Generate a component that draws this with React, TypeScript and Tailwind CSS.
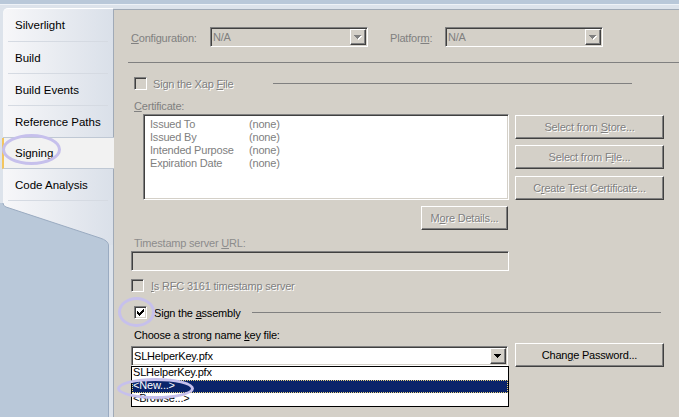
import React from "react";

const emb = "text-[#808080] [text-shadow:1px_1px_0_#ffffff]";
const sunken =
  "border border-t-[#808080] border-l-[#808080] border-b-white border-r-white shadow-[inset_1px_1px_0_#404040,inset_-1px_-1px_0_#d4d0c8]";
const raised =
  "border border-t-white border-l-white border-b-[#404040] border-r-[#404040] shadow-[inset_-1px_-1px_0_#808080]";

function U({ c }: { c: string }) {
  return <span className="underline decoration-1 underline-offset-[1px]">{c}</span>;
}

function ArrowGlyph({ color }: { color: string }) {
  return (
    <>
      <rect x="0" y="0" width="7" height="1" fill={color} />
      <rect x="1" y="1" width="5" height="1" fill={color} />
      <rect x="2" y="2" width="3" height="1" fill={color} />
      <rect x="3" y="3" width="1" height="1" fill={color} />
    </>
  );
}

function Arrow({ disabled }: { disabled?: boolean }) {
  return (
    <div className={`w-[16px] h-full shrink-0 bg-[#d4d0c8] ${raised} flex items-center justify-center`}>
      <svg width="8" height="5" viewBox="0 0 8 5" shapeRendering="crispEdges">
        {disabled ? (
          <>
            <g transform="translate(1,1)">
              <ArrowGlyph color="#ffffff" />
            </g>
            <ArrowGlyph color="#808080" />
          </>
        ) : (
          <ArrowGlyph color="#000000" />
        )}
      </svg>
    </div>
  );
}

function Combo({ width, text, disabled }: { width: string; text: string; disabled?: boolean }) {
  return (
    <div
      className={`${width} h-[20px] p-[1px] ${sunken} ${
        disabled ? "bg-[#d4d0c8] text-[#808080]" : "bg-white text-black"
      } flex items-stretch`}
    >
      <span className="flex-1 pl-[1px] pt-px flex items-center">{text}</span>
      <Arrow disabled={disabled} />
    </div>
  );
}

function Check({ checked, disabled }: { checked?: boolean; disabled?: boolean }) {
  return (
    <div
      className={`w-[13px] h-[13px] shrink-0 ${sunken} ${
        disabled ? "bg-[#d4d0c8]" : "bg-white"
      } flex items-center justify-center`}
    >
      {checked && (
        <svg width="7" height="7" viewBox="0 0 7 7" shapeRendering="crispEdges">
          <rect x="6" y="0" width="1" height="1" fill="#000" />
          <rect x="5" y="1" width="2" height="1" fill="#000" />
          <rect x="0" y="2" width="1" height="1" fill="#000" />
          <rect x="4" y="2" width="3" height="1" fill="#000" />
          <rect x="0" y="3" width="2" height="1" fill="#000" />
          <rect x="3" y="3" width="3" height="1" fill="#000" />
          <rect x="0" y="4" width="5" height="1" fill="#000" />
          <rect x="1" y="5" width="3" height="1" fill="#000" />
          <rect x="2" y="6" width="1" height="1" fill="#000" />
        </svg>
      )}
    </div>
  );
}

function Btn({ children, className, disabled }: { children: React.ReactNode; className: string; disabled?: boolean }) {
  return (
    <div
      className={`${className} bg-[#d4d0c8] ${raised} flex items-center justify-center pt-px ${
        disabled ? emb : "text-black"
      }`}
    >
      {children}
    </div>
  );
}

const tabs = ["Silverlight", "Build", "Build Events", "Reference Paths", "Signing", "Code Analysis"];

export default function App() {
  return (
    <div className="relative w-[679px] h-[417px] overflow-hidden bg-[#b9c8d9] font-['Liberation_Sans',Tahoma,sans-serif] text-[11px] leading-[13px] text-black">
      <div className="h-[4px] bg-[#b9c8d9]" />
      <div className="flex h-[413px] bg-[#dde3eb] shadow-[inset_0_1px_0_#eef2f7]">
        {/* Left tabs */}
        <aside className="w-[113px] shrink-0 flex flex-col">
          <div className="h-[4px] shrink-0" />
          <div className="ml-[3px] rounded-tl-[5px] border-t border-white bg-linear-to-r from-[#f7f7f9] to-[#dae0e9] flex flex-col text-[11.5px]">
            {tabs.map((t, i) => {
              if (t === "Signing") {
                return (
                  <div
                    key={t}
                    className="relative z-10 -mr-px h-[31px] bg-[#f2f2f2] border-b border-[#bfc8d4] border-l-2 border-l-[#f3c55e] -ml-px pl-[11px] pt-px flex items-center"
                  >
                    {t}
                  </div>
                );
              }
              const before = t === "Reference Paths";
              return (
                <div key={t} className={`${i === 0 ? "h-[33px]" : "h-[32px]"} flex flex-col`}>
                  <div className="flex-1 flex items-center pl-[12px] pt-px">{t}</div>
                  {before ? (
                    <div className="h-px bg-[#bfc8d4] -mr-px relative z-10" />
                  ) : (
                    <div className="h-px mx-[5px] bg-[#d5dae2]" />
                  )}
                </div>
              );
            })}
          </div>
          <svg width="113" height="44" viewBox="0 0 113 44" className="shrink-0 block">
            <defs>
              <linearGradient id="tg" x1="0" x2="1" y1="0" y2="0">
                <stop offset="0" stopColor="#f7f7f9" />
                <stop offset="1" stopColor="#dae0e9" />
              </linearGradient>
            </defs>
            <rect x="0" y="0" width="113" height="44" fill="#dde3eb" />
            <rect x="3" y="0" width="110" height="44" fill="url(#tg)" />
            <path d="M0,2 L3,2 Q3,5 6,6 L100,37 Q108,39.5 108,44 L0,44 Z" fill="#b9c8d9" />
            <path d="M3,2 Q3,5 6,6 L100,37 Q108,39.5 108.5,44" fill="none" stroke="#9aabc1" strokeWidth="1" />
          </svg>
          <div className="flex flex-1">
            <div className="w-[109px] bg-[#b9c8d9] border-r border-[#9aabc1]" />
          </div>
        </aside>

        {/* Panel */}
        <main className="flex-1 mt-[5px] bg-[#d4d0c8] border-l border-t border-[#a0aab7] pl-[17px] pt-[17px] flex flex-col items-start tracking-[-0.2px]">
          <div className="flex items-center h-[20px]">
            <span className="w-[79px] pt-[2px] text-[#808080]">
              <U c="C" />
              onfiguration:
            </span>
            <Combo width="w-[158px]" text="N/A" disabled />
            <span className="ml-[22px] w-[55px] pt-[2px] text-[#808080]">
              Platfor
              <U c="m" />:
            </span>
            <Combo width="w-[158px]" text="N/A" disabled />
          </div>

          <div className="self-stretch -ml-[3px] mt-[15px] h-px bg-[#808080]" />

          <div className="mt-[14px] h-[13px] flex items-center">
            <div className="ml-[3px]">
              <Check disabled />
            </div>
            <span className={`ml-[6px] w-[120px] pt-px ${emb}`}>
              Sign the Xap <U c="F" />
              ile
            </span>
            <div className="w-[359px] h-px bg-[#808080]" />
          </div>

          <div className="mt-[10px] ml-[3px] text-[#808080]">
            <U c="C" />
            ertificate:
          </div>

          <div className="mt-[1px] flex items-start">
            <div className={`ml-[12px] w-[366px] h-[86px] bg-white ${sunken} pt-[3px] pl-[6px] text-[#808080]`}>
              <div className="grid grid-cols-[99px_1fr]">
                <span>Issued To</span>
                <span>(none)</span>
                <span>Issued By</span>
                <span>(none)</span>
                <span>Intended Purpose</span>
                <span>(none)</span>
                <span>Expiration Date</span>
                <span>(none)</span>
              </div>
            </div>
            <div className="ml-[6px] pt-px flex flex-col">
              <Btn className="w-[149px] h-[24px]" disabled>
                <span>
                  Select from <U c="S" />
                  tore...
                </span>
              </Btn>
              <Btn className="w-[149px] h-[24px] mt-[6px]" disabled>
                <span>
                  Select from F<U c="i" />
                  le...
                </span>
              </Btn>
              <Btn className="w-[149px] h-[24px] mt-[7px]" disabled>
                <span>
                  C<U c="r" />
                  eate Test Certificate...
                </span>
              </Btn>
            </div>
          </div>

          <Btn className="mt-[6px] ml-[290px] w-[87px] h-[24px]" disabled>
            <span>
              M<U c="o" />
              re Details...
            </span>
          </Btn>

          <div className="mt-[7px] ml-[3px] text-[#8c8c8c]">
            Timestamp server <U c="U" />
            RL:
          </div>
          <div className={`mt-[1px] w-[378px] h-[20px] bg-[#d4d0c8] ${sunken}`} />

          <div className="mt-[8px] h-[13px] flex items-center">
            <Check disabled />
            <span className={`ml-[7px] pt-px ${emb}`}>
              <U c="I" />s RFC 3161 timestamp server
            </span>
          </div>

          <div className="mt-[14px] h-[13px] flex items-center">
            <div className="ml-[3px]">
              <Check checked />
            </div>
            <span className="ml-[7px] w-[98px] pt-px">
              Sign the <U c="a" />
              ssembly
            </span>
            <div className="w-[409px] h-px bg-[#808080]" />
          </div>

          <div className="mt-[10px] ml-[3px]">
            Choose a strong name <U c="k" />
            ey file:
          </div>

          <div className="mt-[1px] flex items-start">
            <div className="relative mt-[3px]">
              <Combo width="w-[377px]" text="SLHelperKey.pfx" />
              <div className="absolute left-0 top-[20px] w-[378px] h-[41px] border border-black bg-white z-20">
                <div className="h-[13px] overflow-hidden pl-[1px]">
                  <div className="-mt-[1px]">SLHelperKey.pfx</div>
                </div>
                <div className="h-[13px] overflow-hidden bg-[#0a246a] text-white border border-dotted border-[#e6d27a]">
                  <div className="-mt-[2px]">&lt;New...&gt;</div>
                </div>
                <div className="h-[13px] overflow-hidden pl-[1px]">
                  <div className="-mt-[1px]">&lt;Browse...&gt;</div>
                </div>
              </div>
            </div>
            <Btn className="ml-[7px] w-[149px] h-[24px]">
              <span>
                Chan<U c="g" />
                e Password...
              </span>
            </Btn>
          </div>
        </main>
      </div>

      {/* Annotation ellipses */}
      <div className="absolute left-[2px] top-[134px] w-[59px] h-[31px] rounded-[50%] border-[3px] border-[#c6c0ec] z-30" />
      <div className="absolute left-[118px] top-[297px] w-[37px] h-[30px] rounded-[50%] border-[3px] border-[#c6c0ec] z-30" />
      <div className="absolute left-[117px] top-[378px] w-[77px] h-[21px] rounded-[50%] border-[3px] border-[#c6c0ec] z-30" />
    </div>
  );
}
